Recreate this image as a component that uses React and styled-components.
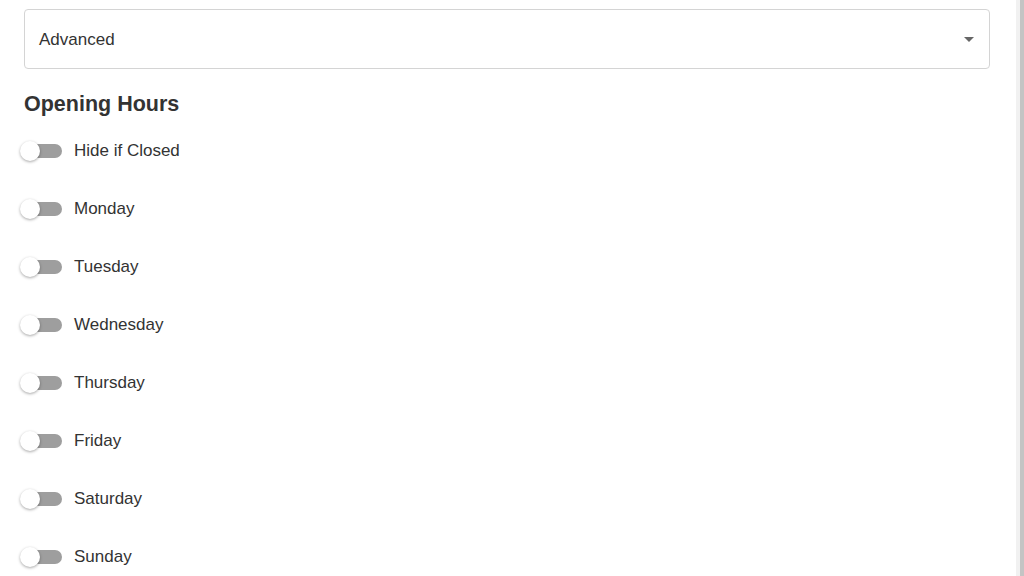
import React, { useState } from 'react';
import styled, { createGlobalStyle } from 'styled-components';

const GlobalStyle = createGlobalStyle`
  html, body {
    margin: 0;
    padding: 0;
    background: #ffffff;
    font-family: "Liberation Sans", Arial, sans-serif;
    color: #333333;
    overflow: hidden;
  }
`;

const Page = styled.div`
  display: flex;
  width: 1024px;
  height: 576px;
`;

const Content = styled.div`
  flex: 1;
  padding: 9px 26px 0 24px;
  box-sizing: border-box;
`;

const ScrollTrack = styled.div`
  width: 8px;
  height: 100%;
  display: flex;
  > div:first-child {
    width: 4px;
    background: #f1f1f1;
  }
  > div:last-child {
    width: 4px;
    background: #c4c4c4;
  }
`;

const SelectBox = styled.div`
  height: 60px;
  border: 1px solid #d4d4d4;
  border-radius: 4px;
  box-sizing: border-box;
  display: flex;
  align-items: center;
  justify-content: space-between;
  padding: 2px 15px 0 14px;
  font-size: 17px;
  color: #333;
`;

const Arrow = styled.span`
  width: 0;
  height: 0;
  margin-top: -2px;
  border-left: 5px solid transparent;
  border-right: 5px solid transparent;
  border-top: 5px solid #666;
`;

const Heading = styled.h2`
  margin: 23px 0 0 0;
  font-size: 21.5px;
  font-weight: bold;
  color: #333;
  line-height: 24px;
`;

const List = styled.div`
  display: flex;
  flex-direction: column;
  margin-top: 21px;
  gap: 30px;
`;

const Row = styled.label`
  display: flex;
  align-items: center;
  height: 28px;
  font-size: 17px;
  color: #333;
  cursor: pointer;
`;

const Toggle = styled.span`
  position: relative;
  width: 42px;
  height: 20px;
  margin-left: -4px;
  margin-right: 12px;
  flex-shrink: 0;
`;

const Track = styled.span`
  position: absolute;
  left: 6px;
  right: 0;
  top: 3px;
  height: 14px;
  border-radius: 7px;
  background: ${p => (p.on ? '#7fb3e8' : '#9e9e9e')};
`;

const Knob = styled.span`
  position: absolute;
  top: 0;
  left: ${p => (p.on ? '22px' : '0')};
  width: 20px;
  height: 20px;
  border-radius: 50%;
  background: ${p => (p.on ? '#1976d2' : '#ffffff')};
  box-shadow: 0 1px 3px rgba(0, 0, 0, 0.35);
`;

const days = ['Hide if Closed', 'Monday', 'Tuesday', 'Wednesday', 'Thursday', 'Friday', 'Saturday', 'Sunday'];

export default function App() {
  const [on, setOn] = useState({});
  return (
    <Page>
      <GlobalStyle />
      <Content>
        <SelectBox>
          <span>Advanced</span>
          <Arrow />
        </SelectBox>
        <Heading>Opening Hours</Heading>
        <List>
          {days.map(d => (
            <Row key={d} onClick={() => setOn({ ...on, [d]: !on[d] })}>
              <Toggle>
                <Track on={on[d]} />
                <Knob on={on[d]} />
              </Toggle>
              {d}
            </Row>
          ))}
        </List>
      </Content>
      <ScrollTrack>
        <div />
        <div />
      </ScrollTrack>
    </Page>
  );
}
